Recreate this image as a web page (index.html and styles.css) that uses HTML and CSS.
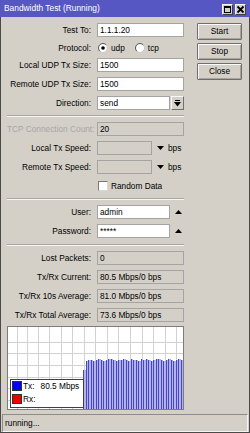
FILE: index.html
```html
<!DOCTYPE html>
<html>
<head>
<meta charset="utf-8">
<link rel="stylesheet" href="styles.css">
</head>
<body>
<div class="window">
  <div class="titlebar">
    <span class="title">Bandwidth Test (Running)</span>
    <div class="tb-btns">
      <span class="tb-btn"><svg width="9" height="9" viewBox="0 0 9 9"><rect x="1.5" y="1.5" width="6" height="6" fill="none" stroke="#000"/><rect x="1" y="1" width="7" height="2" fill="#000"/></svg></span>
      <span class="tb-btn"><svg width="9" height="9" viewBox="0 0 9 9"><path d="M1.5 1.5 L7.5 7.5 M7.5 1.5 L1.5 7.5" stroke="#000" stroke-width="1.8"/></svg></span>
    </div>
  </div>
  <div class="frame">
    <div class="main">
      <div class="form">
        <div class="row"><span class="lbl">Test To:</span><span class="inp w-full">1.1.1.20</span></div>
        <div class="row row-radio tight">
          <span class="lbl">Protocol:</span>
          <span class="opt">
            <svg class="radio" width="10" height="10" viewBox="0 0 10 10"><circle cx="5" cy="5" r="4.5" fill="#fff" stroke="#c8c8c8"/><path d="M1.8 8.2 A4.5 4.5 0 0 1 8.2 1.8" fill="none" stroke="#5a5a5a"/><circle cx="5" cy="5" r="1.8" fill="#000"/></svg>
            <span class="opt-txt">udp</span>
          </span>
          <span class="opt opt2">
            <svg class="radio" width="10" height="10" viewBox="0 0 10 10"><circle cx="5" cy="5" r="4.5" fill="#fff" stroke="#c8c8c8"/><path d="M1.8 8.2 A4.5 4.5 0 0 1 8.2 1.8" fill="none" stroke="#5a5a5a"/></svg>
            <span class="opt-txt">tcp</span>
          </span>
        </div>
        <div class="row tight"><span class="lbl">Local UDP Tx Size:</span><span class="inp w-full">1500</span></div>
        <div class="row"><span class="lbl">Remote UDP Tx Size:</span><span class="inp w-full">1500</span></div>
        <div class="row"><span class="lbl">Direction:</span><span class="inp w-short">send</span>
          <span class="dd-btn"><svg width="7" height="7" viewBox="0 0 7 7"><rect x="1" y="0" width="5" height="1" fill="#000"/><polygon points="0,2 7,2 3.5,6.5" fill="#000"/></svg></span>
        </div>
        <div class="sep"></div>
        <div class="row"><span class="lbl disabled">TCP Connection Count:</span><span class="inp ro w-full">20</span></div>
        <div class="row"><span class="lbl">Local Tx Speed:</span><span class="inp ro w-speed"></span>
          <svg class="arrow" width="7" height="4" viewBox="0 0 7 4"><polygon points="0,0 7,0 3.5,4" fill="#000"/></svg><span class="unit">bps</span></div>
        <div class="row"><span class="lbl">Remote Tx Speed:</span><span class="inp ro w-speed"></span>
          <svg class="arrow" width="7" height="4" viewBox="0 0 7 4"><polygon points="0,0 7,0 3.5,4" fill="#000"/></svg><span class="unit">bps</span></div>
        <div class="row row-check"><span class="lbl"></span>
          <span class="check"></span><span class="opt-txt">Random Data</span></div>
        <div class="sep sep-gap"></div>
        <div class="row"><span class="lbl">User:</span><span class="inp w-short">admin</span>
          <svg class="arrow up" width="7" height="4" viewBox="0 0 7 4"><polygon points="0,4 7,4 3.5,0" fill="#000"/></svg></div>
        <div class="row"><span class="lbl">Password:</span><span class="inp w-short pw">*****</span>
          <svg class="arrow up" width="7" height="4" viewBox="0 0 7 4"><polygon points="0,4 7,4 3.5,0" fill="#000"/></svg></div>
        <div class="sep sep-gap"></div>
        <div class="row"><span class="lbl">Lost Packets:</span><span class="inp ro w-full">0</span></div>
        <div class="row"><span class="lbl">Tx/Rx Current:</span><span class="inp ro w-full">80.5 Mbps/0 bps</span></div>
        <div class="row"><span class="lbl">Tx/Rx 10s Average:</span><span class="inp ro w-full">81.0 Mbps/0 bps</span></div>
        <div class="row"><span class="lbl">Tx/Rx Total Average:</span><span class="inp ro w-full">73.6 Mbps/0 bps</span></div>
        <div class="graph tight">
          <svg width="175" height="82" viewBox="0 0 175 82">
            <defs>
              <pattern id="bars" patternUnits="userSpaceOnUse" x="75" y="0" width="5" height="82">
                <rect x="0" y="0" width="1" height="82" fill="#4646c6"/>
                <rect x="1" y="0" width="2" height="82" fill="#b2b2ec"/>
                <rect x="3" y="0" width="1" height="82" fill="#4646c6"/>
                <rect x="4" y="0" width="1" height="82" fill="#b2b2ec"/>
              </pattern>
            </defs>
            <g stroke="#d2d2d2" stroke-width="1">
              <path d="M9.5 0V82 M19.5 0V82 M30.5 0V82 M41.5 0V82 M53.5 0V82 M64.5 0V82 M76.5 0V82 M87.5 0V82 M99.5 0V82 M110.5 0V82 M122.5 0V82 M134.5 0V82 M145.5 0V82 M157.5 0V82 M168.5 0V82"/>
              <path d="M0 15.5H175 M0 26.5H175 M0 38.5H175 M0 50.5H175 M0 61.5H175 M0 73.5H175"/>
            </g>
            <path fill="url(#bars)" d="M75 82 V43 H78 V34 H80 V33 H83 V33 H85 V34 H88 V33 H90 V32 H93 V33 H95 V34 H98 V33 H100 V32 H103 V32 H105 V33 H108 V34 H110 V33 H113 V33 H115 V32 H118 V33 H120 V34 H123 V32 H125 V33 H128 V33 H130 V34 H133 V32 H135 V33 H138 V32 H140 V33 H143 V34 H145 V33 H148 V32 H150 V32 H153 V33 H155 V34 H158 V33 H160 V32 H163 V33 H165 V34 H168 V33 H170 V32 H173 V33 H175 V33 H176 V82 Z"/>
          </svg>
          <div class="legend">
            <div class="lg-row"><span class="sw tx"></span><span class="lg-k">Tx:</span><span class="lg-v">80.5 Mbps</span></div>
            <div class="lg-row"><span class="sw rx"></span><span class="lg-k">Rx:</span></div>
          </div>
        </div>
      </div>
      <div class="buttons">
        <div class="btn">Start</div>
        <div class="btn">Stop</div>
        <div class="btn">Close</div>
      </div>
    </div>
    <div class="status">running...</div>
  </div>
</div>
</body>
</html>
```
FILE: styles.css
```css
* { box-sizing: border-box; margin: 0; padding: 0; }
html, body { width: 250px; height: 433px; overflow: hidden; }
body {
  font-family: "Liberation Sans", Arial, sans-serif;
  font-size: 8.3px;
  color: #000;
  background: #d4d0c8;
}
.window { width: 250px; height: 433px; display: flex; flex-direction: column; }
.titlebar {
  height: 17px;
  background: #5757c4;
  color: #fff;
  display: flex;
  align-items: center;
  justify-content: space-between;
  padding-left: 4px;
  padding-right: 4px;
  font-size: 8.4px;
}
.title { line-height: 17px; }
.tb-btns { display: flex; gap: 2px; align-self: flex-start; margin-top: 4px; }
.tb-btn {
  width: 11px; height: 11px;
  background: #d4d0c8;
  border: 1px solid;
  border-color: #f4f4f4 #404040 #404040 #f4f4f4;
  display: flex; align-items: center; justify-content: center;
}
.frame {
  flex: 1;
  display: flex;
  flex-direction: column;
  border: 1px solid #4a4a4a;
  border-top: none;
}
.main { flex: 1; display: flex; padding: 6px 0 0 6px; }
.form { width: 177px; display: flex; flex-direction: column; gap: 5px; }
.row { display: flex; align-items: center; height: 14px; }
.row-radio, .row-check { height: 13px; }
.tight { margin-top: -1px; }
.sep-gap { margin-top: 1px; }
.lbl { width: 84px; margin-right: 6px; text-align: right; white-space: nowrap; }
.lbl.disabled { color: #a6a6a6; }
.inp {
  height: 14px;
  line-height: 12px;
  border: 1px solid #a4a4a4;
  background: #fff;
  padding-left: 2px;
  white-space: nowrap;
  overflow: hidden;
}
.inp.ro { background: #d4d0c8; }
.w-full { width: 87px; }
.w-short { width: 73px; }
.w-speed { width: 55px; }
.pw { letter-spacing: 0; }
.dd-btn {
  width: 13px; height: 14px;
  margin-left: 1px;
  background: #d4d0c8;
  border: 1px solid;
  border-color: #f8f8f8 #707070 #707070 #f8f8f8;
  display: flex; align-items: center; justify-content: center;
}
.arrow { margin-left: 5px; display: block; }
.unit { margin-left: 4px; }
.opt { display: flex; align-items: center; margin-left: 1px; }
.opt2 { margin-left: 10px; }
.radio { display: block; }
.opt-txt { margin-left: 3px; }
.check {
  width: 10px; height: 10px;
  margin-left: 1px;
  background: #fff;
  border: 1px solid;
  border-color: #7a7a7a #d8d8d8 #d8d8d8 #7a7a7a;
}
.sep {
  height: 2px;
  border-top: 1px solid #aaa69e;
  border-bottom: 1px solid #f6f6f6;
}
.graph {
  position: relative;
  width: 177px;
  height: 84px;
  border: 1px solid #7c7c7c;
  background: #fff;
}
.graph svg { display: block; }
.legend {
  position: absolute;
  left: 2px;
  top: 52px;
  width: 74px;
  height: 29px;
  background: #fff;
  border: 1px solid #404040;
  padding: 1px;
  display: flex;
  flex-direction: column;
  gap: 3px;
}
.lg-row { display: flex; align-items: center; height: 10px; }
.sw { width: 10px; height: 10px; border: 1px solid #303030; }
.sw.tx { background: #0000ff; }
.sw.rx { background: #ee0000; }
.lg-k { margin-left: 1px; }
.lg-v { margin-left: 6px; }
.buttons { margin-left: 13px; width: 45px; display: flex; flex-direction: column; gap: 3px; }
.btn {
  height: 17px;
  line-height: 15px;
  text-align: center;
  background: #d4d0c8;
  border: 1px solid #6e6e6e;
  border-radius: 1px;
  box-shadow: inset 1px 1px 0 #fafafa, inset -1px -1px 0 #a8a49c;
}
.status {
  height: 18px;
  margin: 0 1px 0 1px;
  line-height: 16px;
  padding-left: 2px;
  border: 1px solid;
  border-color: #8c8c8c #f4f4f4 #f4f4f4 #8c8c8c;
}
```
